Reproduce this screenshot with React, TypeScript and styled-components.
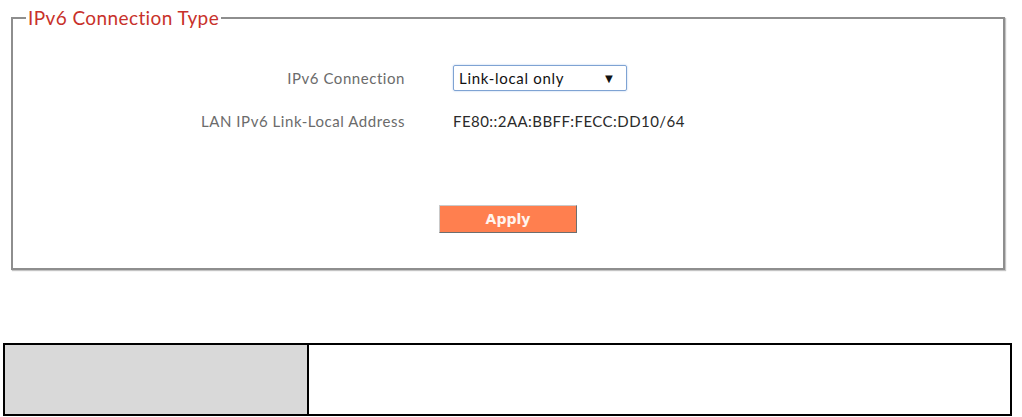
import React from "react";
import styled, { createGlobalStyle } from "styled-components";

const GlobalStyle = createGlobalStyle`
  html, body {
    margin: 0;
    padding: 0;
    background: #ffffff;
    font-family: Lato, "Open Sans", sans-serif;
  }
`;

const Page = styled.div`
  width: 1022px;
  height: 417px;
  padding-top: 17px;
  box-sizing: border-box;
`;

const Frame = styled.section`
  position: relative;
  margin-left: 11px;
  width: 994px;
  box-sizing: border-box;
  padding-bottom: 35px;
  border: 2px solid #8e8e8e;
  box-shadow: 1px 1px 1px #c4c4c4;
`;

const Title = styled.h2`
  position: absolute;
  top: -13px;
  left: 13px;
  margin: 0;
  padding: 0 2px;
  background: #ffffff;
  font-size: 19px;
  font-weight: normal;
  letter-spacing: 0.4px;
  line-height: 24px;
  color: #c8312a;
`;

const Form = styled.div`
  display: grid;
  grid-template-columns: 392px 1fr;
  column-gap: 48px;
  row-gap: 21px;
  align-items: center;
  padding-top: 46px;
`;

const Label = styled.span`
  text-align: right;
  font-size: 15px;
  letter-spacing: 0.55px;
  color: #6b6b6b;
`;

const Value = styled.span`
  font-size: 15px;
  letter-spacing: 0.45px;
  color: #2a2a2a;
`;

const Select = styled.div`
  width: 174px;
  height: 26px;
  box-sizing: border-box;
  border: 1px solid #7fa3d3;
  border-radius: 2px;
  box-shadow: 0 0 2px #a9c4ea;
  display: flex;
  align-items: center;
  justify-content: space-between;
  padding: 0 10px 0 5px;
  font-size: 15px;
  letter-spacing: 0.7px;
  color: #111;
`;

const Arrow = styled.span`
  font-size: 13px;
  color: #111;
`;

const Actions = styled.div`
  display: flex;
  justify-content: center;
  margin-top: 75px;
`;

const ApplyButton = styled.button`
  width: 138px;
  height: 28px;
  background: #ff7f4f;
  border: 1px solid;
  border-color: #c9c9c9 #6e6e6e #6e6e6e #c9c9c9;
  color: #fff4ee;
  font-family: Tahoma, "DejaVu Sans", sans-serif;
  font-weight: bold;
  font-size: 14px;
  padding: 0;
`;

const Table = styled.table`
  margin: 73px 0 0 3px;
  width: 1009px;
  border-collapse: collapse;
`;

const Cell = styled.td<{ $shade?: boolean }>`
  height: 69px;
  border: 2px solid #000;
  background: ${(p) => (p.$shade ? "#d9d9d9" : "#ffffff")};
  width: ${(p) => (p.$shade ? "302px" : "auto")};
  padding: 0;
`;

export default function App() {
  return (
    <Page>
      <GlobalStyle />
      <Frame>
        <Title>IPv6 Connection Type</Title>
        <Form>
          <Label>IPv6 Connection</Label>
          <Select>
            <span>Link-local only</span>
            <Arrow>▼</Arrow>
          </Select>
          <Label>LAN IPv6 Link-Local Address</Label>
          <Value>FE80::2AA:BBFF:FECC:DD10/64</Value>
        </Form>
        <Actions>
          <ApplyButton>Apply</ApplyButton>
        </Actions>
      </Frame>
      <Table>
        <tbody>
          <tr>
            <Cell $shade />
            <Cell />
          </tr>
        </tbody>
      </Table>
    </Page>
  );
}
